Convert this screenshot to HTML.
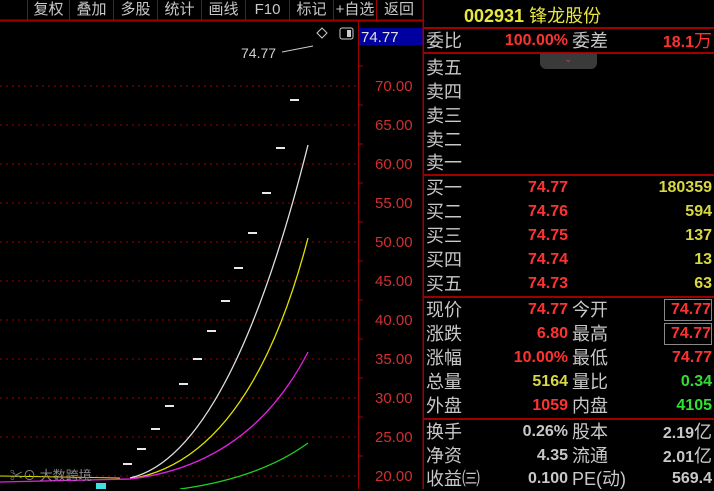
<!DOCTYPE html>
<html><head><meta charset="utf-8"><style>
*{margin:0;padding:0;box-sizing:border-box}
body{width:714px;height:489px;background:#000;overflow:hidden;position:relative;font-family:"Liberation Sans","Noto Sans CJK SC",sans-serif}
.a{position:absolute;white-space:nowrap}
.tb{position:absolute;top:0;height:20px;color:#c8c8c8;font-size:15px;line-height:19px;text-align:center}
.r{position:absolute;left:424px;width:290px;height:24px;font-size:18px;line-height:24px}
.l{position:absolute;left:2px;color:#c8c8c8}
.v1{position:absolute;right:146px;font-weight:bold;font-size:16px}
.k2{position:absolute;left:148px;color:#c8c8c8}
.v2{position:absolute;right:2px;font-weight:bold;font-size:16px}
.red{color:#ff3232}.yel{color:#d8d840}.grn{color:#30e030}.gry{color:#c8c8c8}
.hl{position:absolute;left:424px;width:290px;height:2px;background:#a00000}
</style></head><body>
<svg class="a" style="left:0;top:0" width="424" height="489">
<line x1="0" y1="20.5" x2="424" y2="20.5" stroke="#a00000" stroke-width="2"/>
<line x1="358.5" y1="21" x2="358.5" y2="489" stroke="#a00000"/>
<g stroke="#a00000" stroke-dasharray="2,4">
<line x1="0" y1="86" x2="358" y2="86"/><line x1="0" y1="125" x2="358" y2="125"/><line x1="0" y1="164" x2="358" y2="164"/><line x1="0" y1="203" x2="358" y2="203"/><line x1="0" y1="242" x2="358" y2="242"/><line x1="0" y1="281" x2="358" y2="281"/><line x1="0" y1="320" x2="358" y2="320"/><line x1="0" y1="359" x2="358" y2="359"/><line x1="0" y1="398" x2="358" y2="398"/><line x1="0" y1="437" x2="358" y2="437"/><line x1="0" y1="476" x2="358" y2="476"/>
</g>
<g stroke="#a00000"><line x1="358" y1="66" x2="363" y2="66"/><line x1="358" y1="105" x2="363" y2="105"/><line x1="358" y1="144" x2="363" y2="144"/><line x1="358" y1="183" x2="363" y2="183"/><line x1="358" y1="222" x2="363" y2="222"/><line x1="358" y1="261" x2="363" y2="261"/><line x1="358" y1="300" x2="363" y2="300"/><line x1="358" y1="339" x2="363" y2="339"/><line x1="358" y1="378" x2="363" y2="378"/><line x1="358" y1="417" x2="363" y2="417"/><line x1="358" y1="456" x2="363" y2="456"/></g>
<g fill="#d03030" font-size="15" font-family="Liberation Sans">
<text x="375" y="91">70.00</text><text x="375" y="130">65.00</text><text x="375" y="169">60.00</text><text x="375" y="208">55.00</text><text x="375" y="247">50.00</text><text x="375" y="286">45.00</text><text x="375" y="325">40.00</text><text x="375" y="364">35.00</text><text x="375" y="403">30.00</text><text x="375" y="442">25.00</text><text x="375" y="481">20.00</text>
</g>
<rect x="359" y="28" width="64" height="17" fill="#0000a0"/>
<text x="361" y="42" fill="#e0e0e0" font-size="15">74.77</text>
<text x="241" y="58" fill="#d0d0d0" font-size="14">74.77</text>
<line x1="282" y1="52" x2="313" y2="46" stroke="#ccc"/>
<path d="M322 28 L327 33 L322 38 L317 33Z" fill="none" stroke="#ccc"/>
<rect x="340" y="28" width="13" height="11" rx="2" fill="none" stroke="#ccc"/><rect x="347" y="30" width="4" height="7" fill="#ccc"/>
<g stroke="#e8e8e8" stroke-width="2">
<line x1="123" y1="464" x2="132" y2="464"/><line x1="137" y1="449" x2="146" y2="449"/><line x1="151" y1="429" x2="160" y2="429"/><line x1="165" y1="406" x2="174" y2="406"/><line x1="179" y1="384" x2="188" y2="384"/><line x1="193" y1="359" x2="202" y2="359"/><line x1="207" y1="331" x2="216" y2="331"/><line x1="221" y1="301" x2="230" y2="301"/><line x1="234" y1="268" x2="243" y2="268"/><line x1="248" y1="233" x2="257" y2="233"/><line x1="262" y1="193" x2="271" y2="193"/><line x1="276" y1="148" x2="285" y2="148"/><line x1="290" y1="100" x2="299" y2="100"/>
</g>
<path fill="none" stroke="#e0e0e0" stroke-width="1.3" d="M130,478 Q230,455 308,145"/>
<path fill="none" stroke="#e0e000" stroke-width="1.3" d="M130,479 Q250,460 308,238"/>
<path fill="none" stroke="#e020e0" stroke-width="1.3" d="M0,482 L130,479 Q250,465 308,352"/>
<path fill="none" stroke="#20d020" stroke-width="1.3" d="M180,489 Q260,478 308,443"/>
<polyline fill="none" stroke="#e0e000" points="0,476 120,478"/>
<rect x="96" y="483" width="10" height="6" fill="#40e0e0"/>
<text x="10" y="480" fill="#888" font-size="13">✂⊙ 大数跨境</text>
<line x1="423.5" y1="0" x2="423.5" y2="489" stroke="#a00000" stroke-width="2"/>
<g stroke="#a00000"><line x1="27.5" y1="0" x2="27.5" y2="20"/><line x1="69.5" y1="0" x2="69.5" y2="20"/><line x1="113.5" y1="0" x2="113.5" y2="20"/><line x1="157.5" y1="0" x2="157.5" y2="20"/><line x1="201.5" y1="0" x2="201.5" y2="20"/><line x1="245.5" y1="0" x2="245.5" y2="20"/><line x1="289.5" y1="0" x2="289.5" y2="20"/><line x1="333.5" y1="0" x2="333.5" y2="20"/><line x1="376.5" y1="0" x2="376.5" y2="20"/></g>
</svg>
<div class="tb" style="left:28px;width:41px">复权</div><div class="tb" style="left:70px;width:43px">叠加</div><div class="tb" style="left:114px;width:43px">多股</div><div class="tb" style="left:158px;width:43px">统计</div><div class="tb" style="left:202px;width:43px">画线</div><div class="tb" style="left:246px;width:43px">F10</div><div class="tb" style="left:290px;width:43px">标记</div><div class="tb" style="left:334px;width:42px">+自选</div><div class="tb" style="left:377px;width:44px">返回</div>

<div class="a" style="left:464px;top:2px;color:#e8e840;font-size:18px;font-weight:bold">002931 <span style="font-weight:normal">锋龙股份</span></div>
<div class="hl" style="top:27px"></div>
<div class="r" style="top:29px"><span class="l">委比</span><span class="v1 red" style="right:146px">100.00%</span><span class="k2">委差</span><span class="v2 red">18.1<span style="font-weight:normal;font-size:18px">万</span></span></div>
<div class="hl" style="top:52px"></div>
<div class="a" style="left:540px;top:53px;width:57px;height:16px;background:#3a3a3a;border-radius:0 0 6px 6px;color:#e03030;font-size:10px;text-align:center;line-height:14px">⌄</div>
<div class="r" style="top:56px"><span class="l">卖五</span></div>
<div class="r" style="top:80px"><span class="l">卖四</span></div>
<div class="r" style="top:104px"><span class="l">卖三</span></div>
<div class="r" style="top:128px"><span class="l">卖二</span></div>
<div class="r" style="top:151px"><span class="l">卖一</span></div>
<div class="hl" style="top:174px"></div>
<div class="r" style="top:176px"><span class="l">买一</span><span class="v1 red">74.77</span><span class="v2 yel">180359</span></div>
<div class="r" style="top:200px"><span class="l">买二</span><span class="v1 red">74.76</span><span class="v2 yel">594</span></div>
<div class="r" style="top:224px"><span class="l">买三</span><span class="v1 red">74.75</span><span class="v2 yel">137</span></div>
<div class="r" style="top:248px"><span class="l">买四</span><span class="v1 red">74.74</span><span class="v2 yel">13</span></div>
<div class="r" style="top:272px"><span class="l">买五</span><span class="v1 red">74.73</span><span class="v2 yel">63</span></div>
<div class="hl" style="top:296px"></div>
<div class="r" style="top:298px"><span class="l">现价</span><span class="v1 red">74.77</span><span class="k2">今开</span><span class="v2 red" style="border:1px solid #888;top:1px;line-height:20px;padding-left:6px">74.77</span></div>
<div class="r" style="top:322px"><span class="l">涨跌</span><span class="v1 red">6.80</span><span class="k2">最高</span><span class="v2 red" style="border:1px solid #888;top:1px;line-height:20px;padding-left:6px">74.77</span></div>
<div class="r" style="top:346px"><span class="l">涨幅</span><span class="v1 red">10.00%</span><span class="k2">最低</span><span class="v2 red">74.77</span></div>
<div class="r" style="top:370px"><span class="l">总量</span><span class="v1 yel">5164</span><span class="k2">量比</span><span class="v2 grn">0.34</span></div>
<div class="r" style="top:394px"><span class="l">外盘</span><span class="v1 red">1059</span><span class="k2">内盘</span><span class="v2 grn">4105</span></div>
<div class="hl" style="top:418px"></div>
<div class="r" style="top:420px"><span class="l">换手</span><span class="v1 gry">0.26%</span><span class="k2">股本</span><span class="v2 gry">2.19<span style="font-weight:normal;font-size:18px">亿</span></span></div>
<div class="r" style="top:444px"><span class="l">净资</span><span class="v1 gry">4.35</span><span class="k2">流通</span><span class="v2 gry">2.01<span style="font-weight:normal;font-size:18px">亿</span></span></div>
<div class="r" style="top:467px"><span class="l">收益㈢</span><span class="v1 gry">0.100</span><span class="k2">PE(动)</span><span class="v2 gry">569.4</span></div>
</body></html>
